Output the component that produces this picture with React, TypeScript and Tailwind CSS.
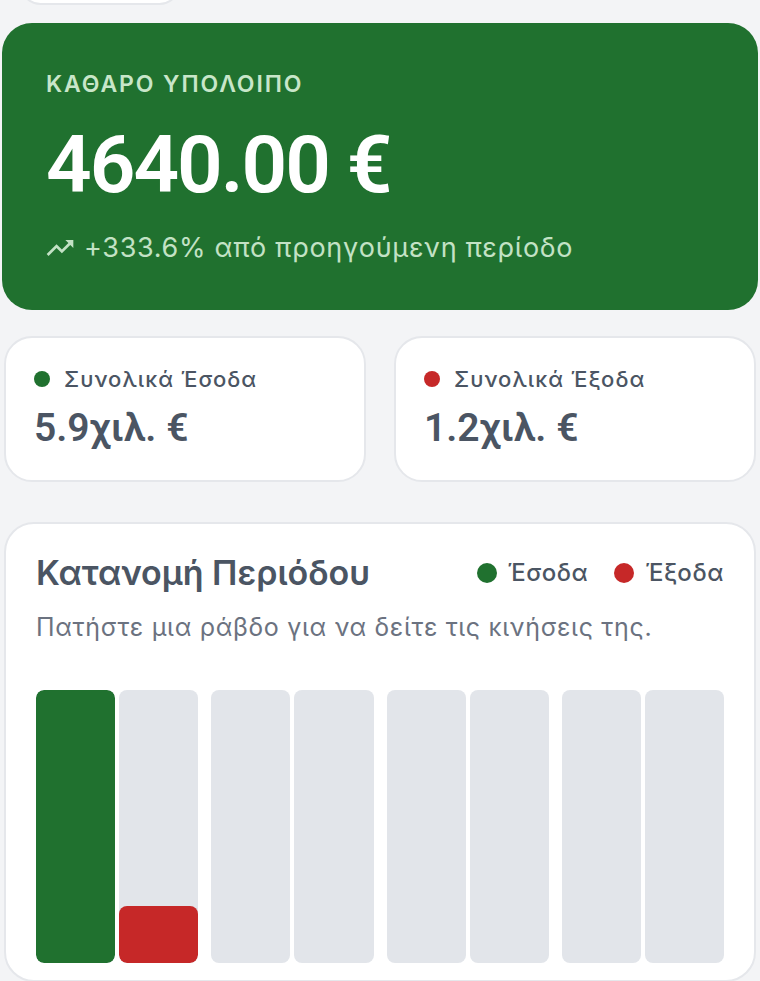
import React from "react";

const bars: { income: number; expense: number }[] = [
  { income: 100, expense: 21 },
  { income: 0, expense: 0 },
  { income: 0, expense: 0 },
  { income: 0, expense: 0 },
];

function TrendUp() {
  return (
    <svg width="32" height="32" viewBox="0 0 24 24" fill="currentColor">
      <path d="M16 6l2.29 2.29-4.88 4.88-4-4L2 16.59 3.41 18l6-6 4 4 6.3-6.29L22 12V6z" />
    </svg>
  );
}

export default function App() {
  return (
    <div className="min-h-[981px] w-[760px] overflow-hidden bg-[#f3f4f6] px-[2px] font-['Inter','Noto_Sans',sans-serif]">
      <div className="ml-[18px] -mt-[36px] h-[41px] w-[160px] rounded-full border-2 border-[#e5e7eb] bg-white" />

      <div className="mt-[18px] flex h-[287px] flex-col rounded-[30px] bg-[#20712f] px-[44px] pt-[47px]">
        <div className="text-[23px] font-semibold leading-[28px] tracking-[1.9px] text-[#c8e6c9]">ΚΑΘΑΡΟ ΥΠΟΛΟΙΠΟ</div>
        <div className="mt-[27px] font-['Roboto',sans-serif] text-[80px] font-semibold leading-[80px] tracking-[-0.025em] text-white">4640.00 €</div>
        <div className="mt-[26px] flex items-center gap-[8px] text-[27px] leading-[34px] tracking-[0.7px] text-[#c3e2c5]">
          <span className="-ml-[2px]"><TrendUp /></span>
          <span>+333.6% από προηγούμενη περίοδο</span>
        </div>
      </div>

      <div className="mt-[26px] grid grid-cols-2 gap-[28px] px-[2px]">
        <div className="h-[146px] rounded-[28px] border-2 border-[#e5e7eb] bg-white px-[28px] pt-[27px]">
          <div className="flex items-center gap-[14px]">
            <span className="h-[16px] w-[16px] rounded-full bg-[#20712f]" />
            <span className="text-[22px] font-medium leading-[28px] tracking-[1px] text-[#4b5563]">Συνολικά Έσοδα</span>
          </div>
          <div className="mt-[12px] font-['Roboto',sans-serif] text-[39px] font-semibold leading-[46px] text-[#4b5563]">5.9χιλ. €</div>
        </div>
        <div className="h-[146px] rounded-[28px] border-2 border-[#e5e7eb] bg-white px-[28px] pt-[27px]">
          <div className="flex items-center gap-[14px]">
            <span className="h-[16px] w-[16px] rounded-full bg-[#c62828]" />
            <span className="text-[22px] font-medium leading-[28px] tracking-[1px] text-[#4b5563]">Συνολικά Έξοδα</span>
          </div>
          <div className="mt-[12px] font-['Roboto',sans-serif] text-[39px] font-semibold leading-[46px] text-[#4b5563]">1.2χιλ. €</div>
        </div>
      </div>

      <div className="mx-[2px] mt-[40px] h-[460px] rounded-[30px] border-2 border-[#e5e7eb] bg-white px-[30px] pt-[27px]">
        <div className="flex items-center justify-between">
          <div className="text-[34px] font-semibold leading-[44px] text-[#4b5563]">Κατανομή Περιόδου</div>
          <div className="flex items-center gap-[26px] text-[24px] font-medium leading-[32px] tracking-[0.6px] text-[#4b5563]">
            <div className="flex items-center gap-[11px]">
              <span className="h-[20px] w-[20px] rounded-full bg-[#20712f]" />
              <span>Έσοδα</span>
            </div>
            <div className="flex items-center gap-[11px]">
              <span className="h-[20px] w-[20px] rounded-full bg-[#c62828]" />
              <span>Έξοδα</span>
            </div>
          </div>
        </div>
        <div className="mt-[16px] text-[25px] leading-[32px] tracking-[0.7px] text-[#6b7280]">Πατήστε μια ράβδο για να δείτε τις κινήσεις της.</div>

        <div className="mt-[47px] flex h-[273px] gap-[13px]">
          {bars.map((b, i) => (
            <div key={i} className="flex flex-1 gap-[4px]">
              <div className="relative flex-1 overflow-hidden rounded-[8px] bg-[#e2e5ea]">
                {b.income > 0 && (
                  <div className="absolute bottom-0 left-0 right-0 rounded-[8px] bg-[#20712f]" style={{ height: `${b.income}%` }} />
                )}
              </div>
              <div className="relative flex-1 overflow-hidden rounded-[8px] bg-[#e2e5ea]">
                {b.expense > 0 && (
                  <div className="absolute bottom-0 left-0 right-0 rounded-[8px] bg-[#c62828]" style={{ height: `${b.expense}%` }} />
                )}
              </div>
            </div>
          ))}
        </div>
      </div>
    </div>
  );
}
